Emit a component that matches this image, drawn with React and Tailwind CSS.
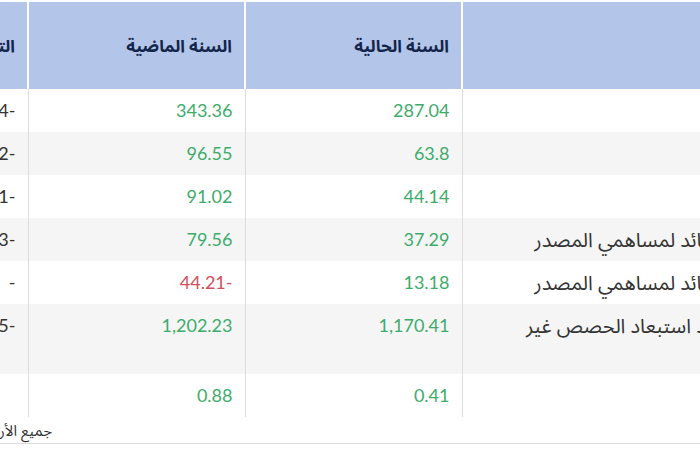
const rows = [
  { label: "الإيرادات", cur: "287.04", prev: "343.36", chg: "-16.4" },
  { label: "إجمالي الربح", cur: "63.8", prev: "96.55", chg: "-33.92" },
  { label: "الربح التشغيلي", cur: "44.14", prev: "91.02", chg: "-51.51" },
  { label: "صافي الربح العائد لمساهمي المصدر", cur: "37.29", prev: "79.56", chg: "-53.13" },
  { label: "صافي الربح العائد لمساهمي المصدر", cur: "13.18", prev: "-44.21", chg: "-", neg: true },
  { label: "صافي الربح بعد استبعاد الحصص غير المسيطرة", cur: "1,170.41", prev: "1,202.23", chg: "-2.65" },
  { label: "ربحية السهم", cur: "0.41", prev: "0.88", chg: "" },
];

const font = { fontFamily: "Lato, 'Noto Sans Arabic', 'DejaVu Sans', sans-serif" };

export default function App() {
  return (
    <div className="w-[700px] h-[450px] overflow-hidden bg-white" style={font}>
      <div className="ml-[-92px] w-[920px] pt-[2px]">
        <table dir="rtl" className="w-[920px] table-fixed">
          <colgroup>
            <col className="w-[366px]" />
            <col className="w-[217px]" />
            <col className="w-[217px]" />
            <col className="w-[120px]" />
          </colgroup>
          <thead>
            <tr className="h-[87px] bg-[#b3c6ea] text-[#14254a]">
              <th className="border-l-2 border-white px-3 text-right text-[17px] font-bold"></th>
              <th className="border-l-2 border-white px-3 text-right text-[17px] font-bold">السنة الحالية</th>
              <th className="border-l-2 border-white px-3 text-right text-[17px] font-bold">السنة الماضية</th>
              <th className="px-3 text-right text-[17px] font-bold">التغير (%)</th>
            </tr>
          </thead>
          <tbody>
            {rows.map((r, i) => (
              <tr key={i} className={i % 2 === 1 ? "bg-[#f5f5f5]" : "bg-white"}>
                <td className="border-l border-[#dcdcdc] px-3 py-2 text-right align-top text-[20px] leading-[27px] text-[#333]">
                  {r.label}
                </td>
                <td className="border-l border-[#dcdcdc] px-3 py-2 text-right align-top text-[18px] leading-[27px] text-[#3dac6b]">
                  {r.cur}
                </td>
                <td className={`border-l border-[#dcdcdc] px-3 py-2 text-right align-top text-[18px] leading-[27px] ${r.neg ? "text-[#d2505a]" : "text-[#3dac6b]"}`}>
                  {r.prev}
                </td>
                <td className="px-3 py-2 text-right align-top text-[18px] leading-[27px] text-[#333]">
                  {r.chg}
                </td>
              </tr>
            ))}
          </tbody>
        </table>
      </div>
      <div className="h-[27px] border-b border-[#dcdcdc] flex items-center">
        <div dir="rtl" className="w-[52px] whitespace-nowrap text-[15px] text-[#333]">
          جميع الأرقام بالمليون ريال
        </div>
      </div>
    </div>
  );
}
